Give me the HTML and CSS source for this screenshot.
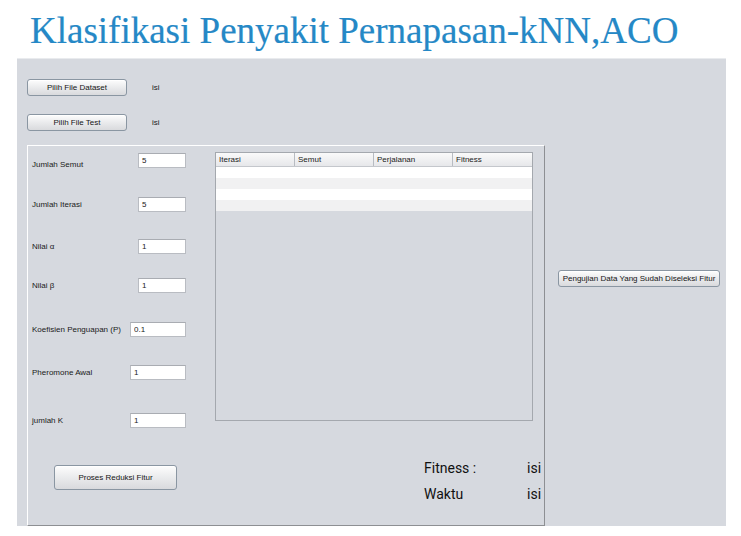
FILE: index.html
```html
<!DOCTYPE html>
<html>
<head>
<meta charset="utf-8">
<link rel="stylesheet" href="styles.css">
</head>
<body>
<div class="title">Klasifikasi Penyakit Pernapasan-kNN,ACO</div>
<div class="frame">
  <div class="file-row">
    <button class="btn btn-file">Pilih File Dataset</button>
    <span class="small">isi</span>
  </div>
  <div class="file-row file-row-2">
    <button class="btn btn-file">Pilih File Test</button>
    <span class="small">isi</span>
  </div>
  <div class="main">
    <div class="inner">
      <div class="left">
        <div class="form">
          <div class="row"><span class="small lbl-low">Jumlah Semut</span><input class="field" value="5"></div>
          <div class="row"><span class="small">Jumlah Iterasi</span><input class="field" value="5"></div>
          <div class="row"><span class="small">Nilai α</span><input class="field" value="1"></div>
          <div class="row"><span class="small">Nilai β</span><input class="field" value="1"></div>
          <div class="row"><span class="small">Koefisien Penguapan (P)</span><input class="field field-wide" value="0.1"></div>
          <div class="row"><span class="small">Pheromone Awal</span><input class="field field-wide" value="1"></div>
          <div class="row"><span class="small">jumlah K</span><input class="field field-wide" value="1"></div>
        </div>
        <button class="btn btn-proses">Proses Reduksi Fitur</button>
      </div>
      <div class="right">
        <div class="table">
          <div class="thead">
            <div class="th">Iterasi</div>
            <div class="th">Semut</div>
            <div class="th">Perjalanan</div>
            <div class="th">Fitness</div>
          </div>
          <div class="tr"></div>
          <div class="tr alt"></div>
          <div class="tr"></div>
          <div class="tr alt"></div>
        </div>
        <div class="results">
          <div class="res-row"><span class="res-label">Fitness :</span><span>isi</span></div>
          <div class="res-row res-row-2"><span class="res-label">Waktu</span><span>isi</span></div>
        </div>
      </div>
    </div>
    <div class="side">
      <button class="btn btn-uji">Pengujian Data Yang Sudah Diseleksi Fitur</button>
    </div>
  </div>
</div>
</body>
</html>
```

FILE: styles.css
```css
* { box-sizing: border-box; }
html, body { margin: 0; padding: 0; background: #ffffff; }
body { width: 741px; height: 536px; overflow: hidden; font-family: "Liberation Sans", Arial, sans-serif; }

.title {
  height: 58px;
  padding: 11px 0 0 30px;
  font-family: "Liberation Serif", "Times New Roman", serif;
  font-size: 37px;
  line-height: 40px;
  color: #2588c6;
  white-space: nowrap;
  -webkit-text-stroke: 0.2px #2588c6;
}

.frame {
  margin-left: 17px;
  width: 709px;
  height: 468px;
  background: #d6d9df;
  border-top: 1px solid #e9ebee;
  padding: 20px 0 0 10px;
  display: flex;
  flex-direction: column;
}

.small { font-size: 8px; color: #1a1a1a; line-height: 10px; }

.file-row { display: flex; align-items: center; gap: 25px; height: 17px; }
.file-row-2 { margin-top: 18px; }

.btn {
  font-family: "Liberation Sans", Arial, sans-serif;
  font-size: 8px;
  color: #151515;
  background: linear-gradient(#fdfdfd, #e8e9eb 55%, #d9dadd);
  border: 1px solid #8a96a2;
  border-radius: 3px;
  padding: 0;
  margin: 0;
  box-shadow: inset 0 1px 0 #ffffff;
}
.btn-file { width: 100px; height: 17px; }

.main { display: flex; margin-top: 14px; flex: 1; }

.inner {
  width: 518px;
  border-top: 1px solid #ffffff;
  border-left: 1px solid #ffffff;
  border-right: 1px solid #8d8f93;
  border-bottom: 1px solid #8d8f93;
  padding: 6px 0 0 4px;
  display: flex;
  gap: 29px;
}

.left { width: 154px; display: flex; flex-direction: column; }
.form {
  margin-top: 1px;
  display: grid;
  grid-template-rows: 44px 42px 39px 44px 43px 48px 15px;
}
.row { display: flex; align-items: center; justify-content: space-between; height: 15px; }
.lbl-low { position: relative; top: 4px; }

.field {
  width: 48px;
  height: 15px;
  border: 1px solid #b9bcc2;
  border-top-color: #a9acb2;
  background: #ffffff;
  font-family: "Liberation Sans", Arial, sans-serif;
  font-size: 8px;
  color: #1a1a1a;
  padding: 0 0 0 3px;
  margin: 0;
  outline: none;
}
.field-wide { width: 56px; }

.btn-proses { width: 123px; height: 25px; margin: 37px 0 0 22px; font-size: 8px; }

.right { width: 318px; display: flex; flex-direction: column; }
.table {
  height: 269px;
  border: 1px solid #a4a8ae;
  background: #d6d9df;
}
.thead {
  display: grid;
  grid-template-columns: 79px 79px 79px 1fr;
  height: 14px;
  background: linear-gradient(#fafafa, #e6e7ea);
  border-bottom: 1px solid #c4c7cc;
}
.th {
  font-size: 8px;
  color: #1a1a1a;
  line-height: 13px;
  padding-left: 3px;
  border-right: 1px solid #b8bcc2;
}
.th:last-child { border-right: none; }
.tr { height: 11px; background: #ffffff; }
.tr.alt { background: #f1f1f2; }

.results {
  margin-top: 39px;
  padding-left: 209px;
  font-family: Roboto, "Noto Sans", sans-serif;
  font-size: 14px;
  line-height: 16px;
  color: #111;
  white-space: nowrap;
}
.res-row { display: flex; }
.res-row-2 { margin-top: 10px; }
.res-label { width: 103px; flex-shrink: 0; }

.side { padding: 122px 0 0 13px; }
.btn-uji { width: 162px; height: 17px; }
```
